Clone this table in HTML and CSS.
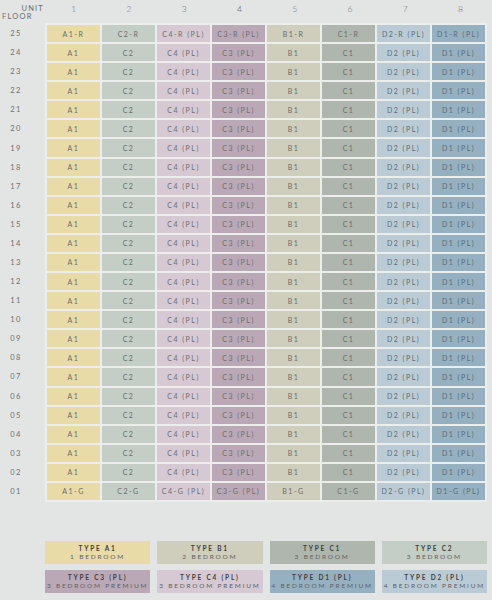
FILE: index.html
```html
<!DOCTYPE html>
<html>
<head>
<meta charset="utf-8">
<link rel="stylesheet" href="styles.css">
</head>
<body>
<div class="page">
  <div class="head">
    <div class="corner"><span class="unit">UNIT</span><span class="floor">FLOOR</span></div>
    <div class="cols">
      <span>1</span><span>2</span><span>3</span><span>4</span><span>5</span><span>6</span><span>7</span><span>8</span>
    </div>
  </div>
  <div class="body">
    <div class="floors" id="floors"></div>
    <div class="cells" id="cells"></div>
  </div>
  <div class="legend">
    <div class="key a1"><b>TYPE A1</b><span>1 BEDROOM</span></div>
    <div class="key b1"><b>TYPE B1</b><span>2 BEDROOM</span></div>
    <div class="key c1"><b>TYPE C1</b><span>3 BEDROOM</span></div>
    <div class="key c2"><b>TYPE C2</b><span>3 BEDROOM</span></div>
    <div class="key c3"><b>TYPE C3 (PL)</b><span>3 BEDROOM PREMIUM</span></div>
    <div class="key c4"><b>TYPE C4 (PL)</b><span>3 BEDROOM PREMIUM</span></div>
    <div class="key d1"><b>TYPE D1 (PL)</b><span>4 BEDROOM PREMIUM</span></div>
    <div class="key d2"><b>TYPE D2 (PL)</b><span>4 BEDROOM PREMIUM</span></div>
  </div>
</div>
<script src="app.js"></script>
</body>
</html>
```
FILE: app.js
```js
(function () {
  var types = [
    ['a1', 'A1', ''],
    ['c2', 'C2', ''],
    ['c4', 'C4', ' (PL)'],
    ['c3', 'C3', ' (PL)'],
    ['b1', 'B1', ''],
    ['c1', 'C1', ''],
    ['d2', 'D2', ' (PL)'],
    ['d1', 'D1', ' (PL)']
  ];
  var floors = document.getElementById('floors');
  var cells = document.getElementById('cells');
  for (var f = 25; f >= 1; f--) {
    var lab = document.createElement('div');
    lab.className = 'fl';
    lab.textContent = (f < 10 ? '0' : '') + f;
    floors.appendChild(lab);
    for (var i = 0; i < types.length; i++) {
      var t = types[i];
      var txt;
      if (f === 25) txt = t[1] + '-R' + t[2];
      else if (f === 1) txt = t[1] + '-G' + t[2];
      else txt = t[1] + t[2];
      var c = document.createElement('div');
      c.className = 'cell ' + t[0];
      c.textContent = txt;
      cells.appendChild(c);
    }
  }
})();
```
FILE: styles.css
```css
html, body {
  margin: 0;
  padding: 0;
  background: #e3e4e4;
}
body {
  font-family: Lato, "Open Sans", sans-serif;
  color: #666a6c;
}
.page {
  width: 492px;
  height: 600px;
}
.head {
  display: flex;
  height: 23px;
}
.corner {
  width: 45px;
  position: relative;
  font-size: 7.5px;
  letter-spacing: 1.2px;
  color: #6a6d70;
}
.unit {
  position: absolute;
  right: 1px;
  top: 4px;
}
.floor {
  position: absolute;
  left: 2px;
  top: 12px;
}
.cols {
  flex: 1;
  display: grid;
  grid-template-columns: repeat(8, 1fr);
  column-gap: 2px;
  padding: 0 5px 0 2px;
  font-size: 8.5px;
  font-weight: 300;
  color: #707376;
}
.cols span {
  text-align: center;
  padding-top: 4px;
}
.body {
  display: flex;
  height: 479px;
}
.floors {
  width: 45px;
  display: grid;
  grid-template-rows: repeat(25, 1fr);
  row-gap: 2px;
  padding: 2px 0;
  box-sizing: border-box;
}
.fl {
  display: flex;
  align-items: center;
  justify-content: center;
  font-size: 7.5px;
  letter-spacing: 1.3px;
  padding-right: 13px;
  color: #6d7073;
}
.cells {
  width: 442px;
  box-sizing: border-box;
  display: grid;
  grid-template-columns: repeat(8, 1fr);
  grid-template-rows: repeat(25, 1fr);
  gap: 2px;
  padding: 2px;
  background: #eceeec;
}
.cell {
  display: flex;
  align-items: center;
  justify-content: center;
  font-size: 7px;
  letter-spacing: 1.5px;
  white-space: nowrap;
  color: #6a6d6e;
}
.a1 { background: #e9dba7; }
.c2 { background: #c4cdc6; }
.c4 { background: #d6c9d4; }
.c3 { background: #baa8b6; }
.b1 { background: #cfcdbc; }
.c1 { background: #afb6ad; }
.d2 { background: #bacbd6; }
.d1 { background: #95b0c0; }
.d1.cell, .d2.cell { color: #5d6b75; }
.legend {
  margin: 39px 5px 0 45px;
  display: grid;
  grid-template-columns: repeat(4, 1fr);
  grid-auto-rows: 23px;
  column-gap: 7px;
  row-gap: 6px;
}
.key {
  display: flex;
  flex-direction: column;
  align-items: center;
  justify-content: center;
  font-size: 6.5px;
  letter-spacing: 1.8px;
  line-height: 8px;
}
.key b {
  font-weight: 700;
  color: #3e3f40;
}
.key span {
  color: #5f6264;
}
```
